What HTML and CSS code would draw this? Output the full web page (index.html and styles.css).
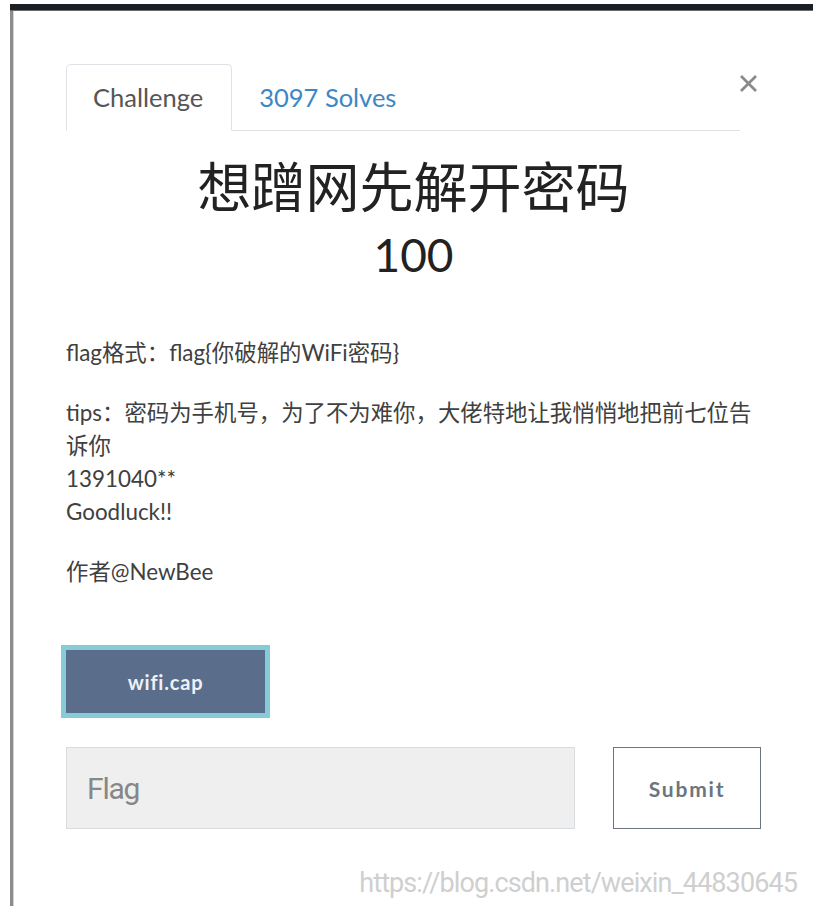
FILE: index.html
```html
<!DOCTYPE html>
<html lang="zh-CN">
<head>
<meta charset="utf-8">
<title>想蹭网先解开密码</title>
<link rel="stylesheet" href="styles.css">
</head>
<body>
<div class="screen">
  <div class="strip"></div>
  <div class="modal">
    <div class="modal-inner">
      <div class="head">
        <ul class="tabs">
          <li class="tab active">Challenge</li>
          <li class="tab"><a class="tab-link" href="#solves">3097 Solves</a></li>
        </ul>
        <button class="close" type="button" aria-label="Close">
          <svg width="17" height="17" viewBox="0 0 17 17"><path d="M2 2 L15 15 M15 2 L2 15" stroke="#8a8a8a" stroke-width="2.8" stroke-linecap="square" fill="none"/></svg>
        </button>
      </div>
      <div class="pane">
        <h2 class="title">想蹭网先解开密码</h2>
        <h3 class="value">100</h3>
        <div class="desc">
          <p>flag格式：flag{你破解的WiFi密码}</p>
          <p>tips：密码为手机号，为了不为难你，大佬特地让我悄悄地把前七位告诉你<br>1391040**<br>Goodluck!!</p>
          <p>作者@NewBee</p>
        </div>
        <div class="files">
          <a class="file-btn" href="#wifi">wifi.cap</a>
        </div>
        <form class="submit-row">
          <input class="flag-input" type="text" placeholder="Flag">
          <button class="submit-btn" type="button">Submit</button>
        </form>
      </div>
    </div>
  </div>
  <div class="watermark">https://blog.csdn.net/weixin_44830645</div>
</div>
</body>
</html>
```

FILE: styles.css
```css
* { box-sizing: border-box; }

html, body {
  margin: 0;
  padding: 0;
  background: #fff;
  height: 906px;
  overflow: hidden;
}

body {
  font-family: Lato, "Noto Sans CJK SC", sans-serif;
  color: #333;
}

.screen {
  position: relative;
  height: 906px;
  margin-left: 10px;
  padding-top: 4px;
}

/* dark page bar behind the dialog */
.strip {
  height: 7px;
  background: #1c1f22;
  border-bottom: 1px solid #6a6a6a;
}

.modal {
  height: 895px;
  border-left: 3px solid #8c8c8c;
  background: #fff;
  box-shadow: inset 1px 0 0 #d4d4d4;
}

.modal-inner {
  padding: 53px 52px 0 53px;
}

/* tab header */
.head {
  display: flex;
  align-items: flex-start;
}

.tabs {
  flex: 1;
  display: flex;
  list-style: none;
  margin: 0;
  padding: 0;
  border-bottom: 1px solid #dee2e6;
}

.tab {
  font-size: 25.5px;
  line-height: 33px;
  padding: 16px 28px 16px 26px;
  border: 1px solid transparent;
  border-radius: 5px 5px 0 0;
  margin-bottom: -1px;
  color: #555;
}

.tab.active {
  border-color: #dee2e6 #dee2e6 #fff;
  background: #fff;
}

.tab-link {
  color: #3d87c4;
  text-decoration: none;
}

.close {
  width: 21px;
  margin: 11px 0 0;
  padding: 0;
  border: 0;
  background: none;
  display: flex;
}

/* challenge pane */
.pane {
  padding-top: 24px;
}

.title {
  margin: 0;
  text-align: center;
  font-size: 54px;
  line-height: 65px;
  font-weight: 400;
  color: #222;
}

.value {
  margin: 8px 0 0;
  text-align: center;
  font-size: 46px;
  line-height: 54px;
  font-weight: 400;
  color: #222;
}

.desc {
  margin-top: 54px;
  font-size: 22.4px;
  line-height: 33px;
  color: #404040;
}

.desc p {
  margin: 0 0 27px;
}

.desc p:last-child {
  margin-bottom: 0;
}

.files {
  margin-top: 62px;
  display: flex;
}

.file-btn {
  display: flex;
  align-items: center;
  justify-content: center;
  width: 199px;
  height: 63px;
  background: #5a6e8b;
  box-shadow: 0 0 0 5px #86ccd8;
  color: #eef1f5;
  font-weight: 700;
  font-size: 20px;
  letter-spacing: 0.8px;
  text-decoration: none;
}

.submit-row {
  margin: 34px 0 0;
  display: flex;
  gap: 38px;
}

.flag-input {
  width: 509px;
  height: 82px;
  background: #efefef;
  border: 1px solid #d9dcdf;
  padding: 0 0 0 20px;
  font-family: Roboto, sans-serif;
  font-size: 30px;
  letter-spacing: -1.2px;
  color: #555;
  outline: none;
}

.flag-input::placeholder {
  color: #878787;
}

.submit-btn {
  width: 148px;
  height: 82px;
  background: #fff;
  border: 1.5px solid #6c757d;
  color: #6c757d;
  font-family: Lato, sans-serif;
  font-weight: 700;
  font-size: 21px;
  letter-spacing: 1.8px;
  padding: 0;
}

/* blog watermark stamped on the capture */
.watermark {
  position: absolute;
  right: 16px;
  top: 867px;
  font-family: Roboto, sans-serif;
  font-size: 27px;
  letter-spacing: -0.9px;
  color: #cfcfcf;
  white-space: nowrap;
}
```
